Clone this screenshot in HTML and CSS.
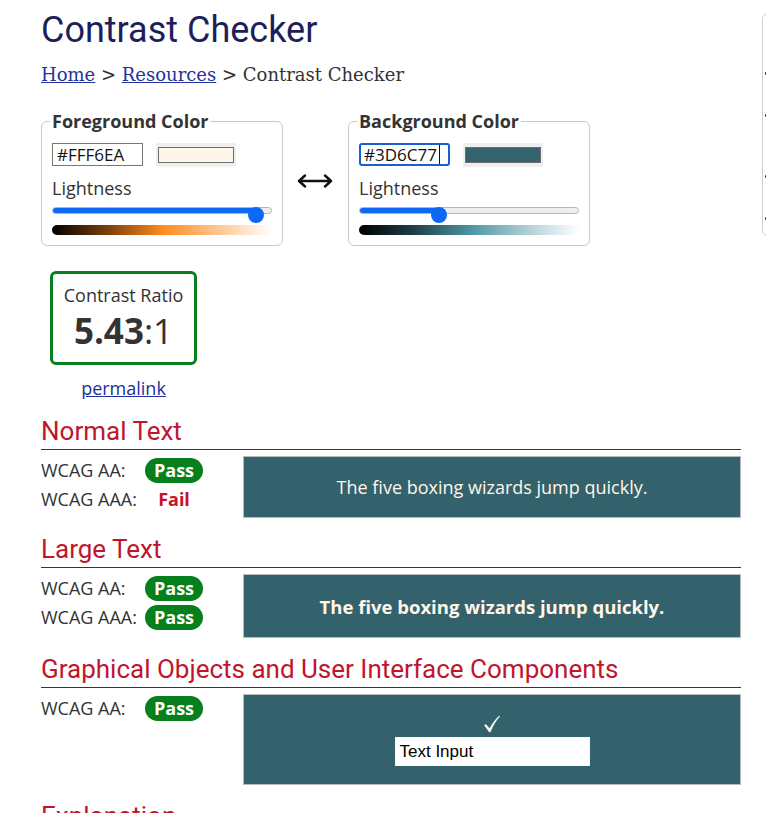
FILE: index.html
```html
<!DOCTYPE html>
<html lang="en">
<head>
<meta charset="utf-8">
<title>Contrast Checker</title>
<link rel="stylesheet" href="styles.css">
</head>
<body>
<div class="page">
  <main class="main">
    <h1 class="title">Contrast Checker</h1>
    <nav class="crumbs"><a href="#">Home</a> &gt; <a href="#">Resources</a> &gt; Contrast Checker</nav>

    <div class="pickers">
      <fieldset class="picker">
        <legend>Foreground Color</legend>
        <div class="color-row">
          <div class="hex">#FFF6EA</div>
          <div class="swatch"><span class="swatch-fill fg-fill"></span></div>
        </div>
        <div class="lightness">Lightness</div>
        <div class="slider">
          <div class="track"><div class="track-fill" style="width:204px"></div></div>
          <span class="thumb" style="left:196px"></span>
        </div>
        <div class="gradient fg-grad"></div>
      </fieldset>

      <svg class="swap" width="36" height="14" viewBox="0 0 36 14" aria-hidden="true">
        <path d="M2 7 H34 M8 1.5 L2 7 L8 12.5 M28 1.5 L34 7 L28 12.5" fill="none" stroke="#111" stroke-width="2.4" stroke-linecap="round" stroke-linejoin="round"/>
      </svg>

      <fieldset class="picker">
        <legend>Background Color</legend>
        <div class="color-row">
          <div class="hex focused">#3D6C77<span class="caret"></span></div>
          <div class="swatch"><span class="swatch-fill bg-fill"></span></div>
        </div>
        <div class="lightness">Lightness</div>
        <div class="slider">
          <div class="track"><div class="track-fill" style="width:80px"></div></div>
          <span class="thumb" style="left:72px"></span>
        </div>
        <div class="gradient bg-grad"></div>
      </fieldset>
    </div>

    <div class="ratio-wrap">
      <div class="ratio">
        <div class="ratio-label">Contrast Ratio</div>
        <div class="ratio-value"><b>5.43</b>:1</div>
      </div>
      <div class="permalink"><a href="#">permalink</a></div>
    </div>

    <section class="result first">
      <h2>Normal Text</h2>
      <div class="result-row">
        <div class="checks">
          <span class="label">WCAG AA:</span><span class="pass">Pass</span>
          <span class="label">WCAG AAA:</span><span class="fail">Fail</span>
        </div>
        <div class="sample">The five boxing wizards jump quickly.</div>
      </div>
    </section>

    <section class="result">
      <h2>Large Text</h2>
      <div class="result-row">
        <div class="checks">
          <span class="label">WCAG AA:</span><span class="pass">Pass</span>
          <span class="label">WCAG AAA:</span><span class="pass">Pass</span>
        </div>
        <div class="sample large">The five boxing wizards jump quickly.</div>
      </div>
    </section>

    <section class="result">
      <h2>Graphical Objects and User Interface Components</h2>
      <div class="result-row">
        <div class="checks">
          <span class="label">WCAG AA:</span><span class="pass">Pass</span>
        </div>
        <div class="sample ui">
          <svg class="check" width="18" height="18" viewBox="0 0 18 18" aria-hidden="true">
            <path d="M1.2 10.2 L2.6 8.9 L6.6 13.2 C9.5 8.2 12.6 4 16.2 0.8 L17 1.6 C13.4 5.4 10.2 10.6 7.4 17.2 L6.2 17.2 Z" fill="#fff6ea"/>
          </svg>
          <div class="text-input">Text Input</div>
        </div>
      </div>
    </section>

    <section class="result">
      <h2>Explanation</h2>
    </section>
  </main>

  <aside class="side">
    <span class="dot"></span>
    <span class="dot"></span>
    <span class="dot"></span>
    <span class="dot"></span>
  </aside>
</div>
</body>
</html>
```

FILE: styles.css
```css
html, body {
  margin: 0;
  padding: 0;
  background: #fff;
  overflow: hidden;
}

body {
  font-family: "Open Sans", "DejaVu Sans", sans-serif;
  font-size: 18px;
  line-height: 23px;
  color: #333;
}

.page {
  display: flex;
  align-items: flex-start;
  gap: 21px;
  padding-left: 41px;
  width: max-content;
}

.main {
  flex: 0 0 700px;
  width: 700px;
}

.title {
  font-family: Roboto, "Liberation Sans", sans-serif;
  font-weight: 400;
  font-size: 36px;
  line-height: 42px;
  margin: 0;
  padding-top: 9px;
  color: #1d1e5b;
}

.crumbs {
  font-family: "DejaVu Serif", "Liberation Serif", serif;
  font-size: 18px;
  line-height: 21px;
  margin-top: 13px;
  color: #333;
}

.crumbs a {
  color: #23339b;
}

.pickers {
  display: flex;
  align-items: center;
  margin-top: 25px;
}

.picker {
  box-sizing: border-box;
  width: 242px;
  min-width: 0;
  margin: 0;
  padding: 0 10px 10px;
  border: 1px solid #c9c9c9;
  border-radius: 6px;
}

.picker legend {
  font-weight: 700;
  font-size: 18px;
  line-height: 23px;
  padding: 0 2px;
  margin-left: -2px;
  color: #333;
}

.swap {
  display: block;
  margin: 6px 15px 0 14px;
}

.color-row {
  display: flex;
  gap: 13px;
  margin-top: 10px;
}

.hex {
  box-sizing: border-box;
  width: 91px;
  height: 23px;
  border: 1px solid #767676;
  padding-left: 4px;
  font-size: 17px;
  line-height: 21px;
  color: #111;
  display: flex;
  align-items: center;
}

.hex.focused {
  border: 2px solid #1b5fcc;
  border-radius: 3px;
  padding-left: 3px;
}

.caret {
  display: inline-block;
  width: 1px;
  height: 19px;
  background: #111;
  margin-left: 2px;
}

.swatch {
  box-sizing: border-box;
  width: 80px;
  height: 24px;
  padding: 4px 2px;
  background: #efefef;
  display: flex;
}

.swatch-fill {
  flex: 1;
  border: 1px solid #6f6f6f;
}

.fg-fill { background: #fff6ea; }
.bg-fill { background: #34636e; }

.lightness {
  margin-top: 10px;
  font-size: 18px;
  line-height: 23px;
}

.slider {
  position: relative;
  height: 16px;
  margin-top: 7px;
}

.track {
  box-sizing: border-box;
  height: 7px;
  margin-top: 5px;
  border: 1px solid #b5b5b5;
  border-radius: 4px;
  background: #efefef;
  overflow: hidden;
}

.track-fill {
  height: 100%;
  background: #0b69f6;
}

.thumb {
  position: absolute;
  top: 0;
  width: 16px;
  height: 16px;
  border-radius: 50%;
  background: #0b69f6;
}

.gradient {
  height: 10px;
  margin-top: 2px;
  border-radius: 5px 0 0 5px;
}

.fg-grad {
  background: linear-gradient(to right, #000 0%, #7a3d08 25%, #ff8a1f 50%, #ffc68c 75%, #fff 100%);
}

.bg-grad {
  background: linear-gradient(to right, #000 0%, #1f3f47 25%, #4a93a2 50%, #a9ccd4 75%, #fff 100%);
}

.ratio-wrap {
  width: 147px;
  margin: 25px 0 0 9px;
}

.ratio {
  box-sizing: border-box;
  width: 147px;
  height: 94px;
  border: 3px solid #0b7f1e;
  border-radius: 6px;
  padding-top: 10px;
  text-align: center;
}

.ratio-label {
  font-size: 18px;
  line-height: 23px;
}

.ratio-value {
  font-size: 35px;
  line-height: 46px;
  margin-top: 1px;
}

.ratio-value b {
  font-weight: 700;
}

.permalink {
  margin-top: 12px;
  text-align: center;
}

.permalink a {
  color: #20309a;
}

.result {
  margin-top: 16px;
}

.result.first {
  margin-top: 16px;
}

.result h2 {
  font-family: Roboto, "Liberation Sans", sans-serif;
  font-weight: 400;
  font-size: 26px;
  line-height: 30px;
  margin: 0;
  padding-bottom: 3px;
  color: #c0162d;
  border-bottom: 1px solid #6e1c26;
}

.result-row {
  display: flex;
  align-items: flex-start;
  margin-top: 6px;
}

.checks {
  flex: 0 0 202px;
  display: grid;
  grid-template-columns: 104px 58px;
  grid-auto-rows: 29px;
  align-items: center;
}

.label {
  font-size: 18px;
  color: #333;
}

.pass {
  height: 25px;
  border-radius: 13px;
  background: #05801d;
  color: #fff;
  font-weight: 700;
  text-align: center;
  line-height: 25px;
}

.fail {
  color: #c8102e;
  font-weight: 700;
  text-align: center;
}

.sample {
  flex: 1;
  box-sizing: border-box;
  height: 62px;
  border: 1px solid #b9b9b9;
  background: #34626c;
  color: #fff6ea;
  display: flex;
  align-items: center;
  justify-content: center;
  font-size: 18px;
}

.sample.large {
  height: 64px;
  font-size: 18.5px;
  font-weight: 700;
}

.sample.ui {
  height: 91px;
  flex-direction: column;
  justify-content: flex-start;
  padding-top: 20px;
}

.check {
  display: block;
}

.text-input {
  box-sizing: border-box;
  width: 195px;
  height: 29px;
  margin-top: 4px;
  background: #fff;
  border: 1px solid #fff6ea;
  padding-left: 4px;
  font-family: "Liberation Sans", Arial, sans-serif;
  font-size: 17px;
  line-height: 27px;
  color: #000;
  align-self: center;
}

.side {
  flex: 0 0 200px;
  box-sizing: border-box;
  height: 223px;
  margin-top: 13px;
  border: 1px solid #cfcfcf;
  border-radius: 6px;
  display: flex;
  flex-direction: column;
  padding-left: 2px;
}

.dot {
  width: 3px;
  height: 3px;
  border-radius: 50%;
  background: #111;
}

.dot:nth-child(1) { margin-top: 58px; }
.dot:nth-child(2) { margin-top: 39px; }
.dot:nth-child(3) { margin-top: 58px; }
.dot:nth-child(4) { margin-top: 39px; }
```
